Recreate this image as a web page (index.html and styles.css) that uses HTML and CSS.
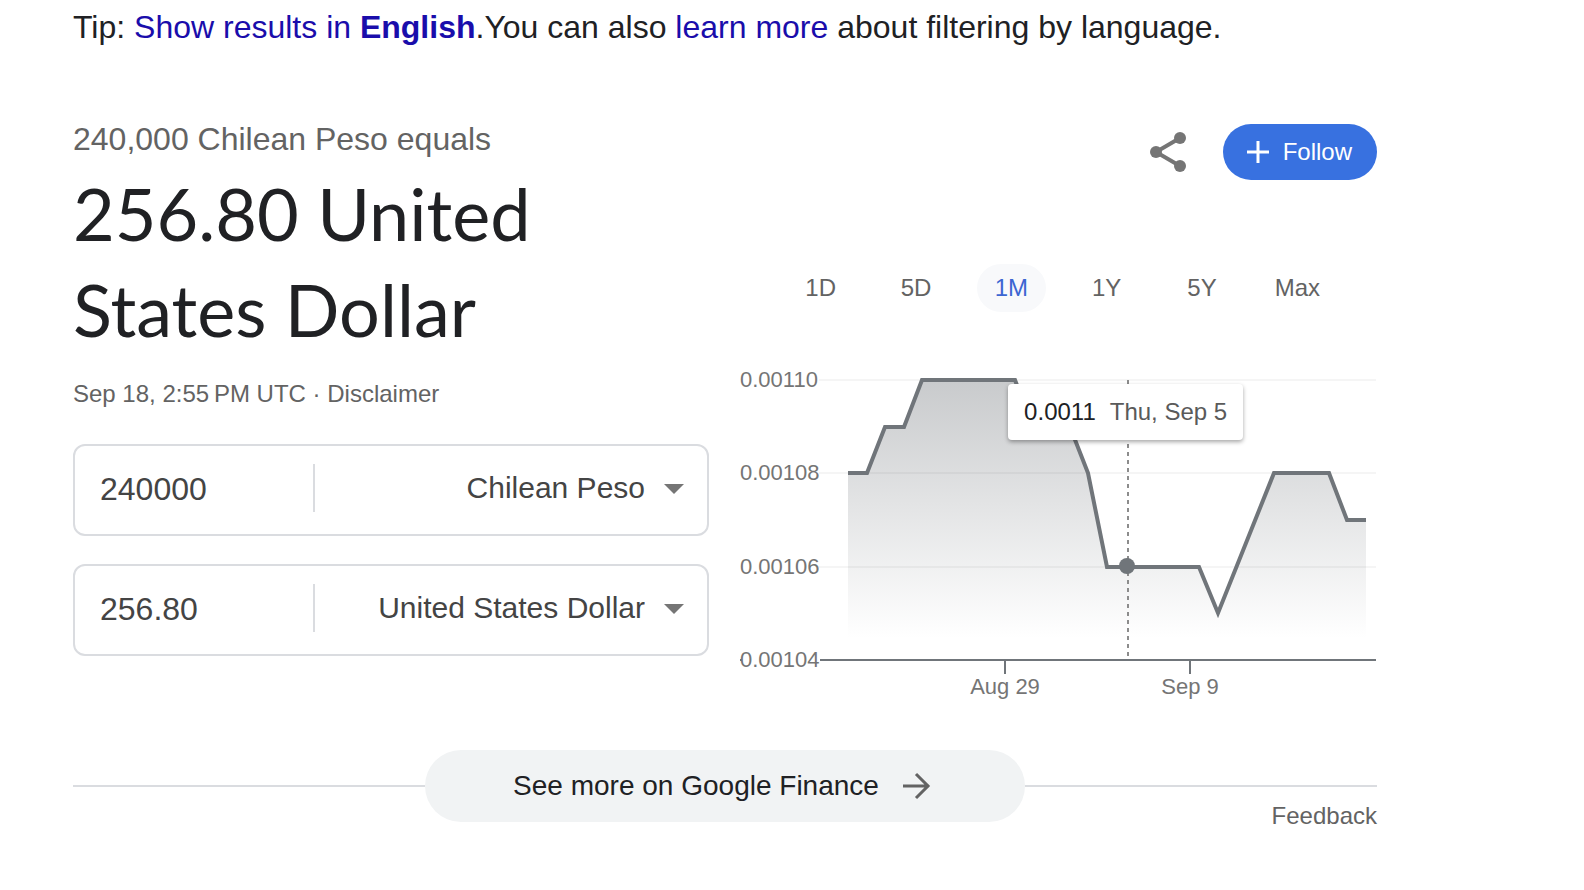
FILE: index.html
```html
<!DOCTYPE html>
<html lang="en">
<head>
<meta charset="utf-8">
<meta name="viewport" content="width=device-width, initial-scale=1">
<title>Chilean Peso to United States Dollar</title>
<link rel="stylesheet" href="styles.css">
</head>
<body>
<main class="page">
  <p class="tip">Tip: <a href="#english">Show results in <b>English</b></a>.You can also <a href="#learn">learn more</a> about filtering by language.</p>

  <div class="converter">
    <section class="rate">
      <p class="source">240,000 Chilean Peso equals</p>
      <h1 class="result">256.80 United States Dollar</h1>
      <p class="stamp">Sep 18, 2:55&#8239;PM UTC · <a href="#disclaimer">Disclaimer</a></p>
      <form class="fields">
        <div class="field">
          <input class="amount" type="text" value="240000" aria-label="Amount in Chilean Peso">
          <div class="picker">
            <select class="currency" aria-label="From currency"><option>Chilean Peso</option><option>United States Dollar</option></select>
            <svg class="caret" viewBox="0 0 20 10" aria-hidden="true"><path d="M0 0h20L10 10z"/></svg>
          </div>
        </div>
        <div class="field">
          <input class="amount" type="text" value="256.80" aria-label="Amount in United States Dollar">
          <div class="picker">
            <select class="currency" aria-label="To currency"><option>United States Dollar</option><option>Chilean Peso</option></select>
            <svg class="caret" viewBox="0 0 20 10" aria-hidden="true"><path d="M0 0h20L10 10z"/></svg>
          </div>
        </div>
      </form>
    </section>

    <section class="history">
      <div class="actions">
        <button class="share" type="button" aria-label="Share">
          <svg viewBox="0 0 24 24" aria-hidden="true"><path d="M18 5 6 12l12 7" fill="none" stroke="currentColor" stroke-width="2"/><circle cx="18" cy="5" r="3"/><circle cx="6" cy="12" r="3"/><circle cx="18" cy="19" r="3"/></svg>
        </button>
        <button class="follow" type="button">
          <svg viewBox="0 0 22 22" aria-hidden="true"><path d="M11 0v22M0 11h22" stroke="currentColor" stroke-width="3"/></svg>
          Follow
        </button>
      </div>
      <div class="ranges">
        <button class="range" type="button">1D</button>
        <button class="range" type="button">5D</button>
        <button class="range selected" type="button">1M</button>
        <button class="range" type="button">1Y</button>
        <button class="range" type="button">5Y</button>
        <button class="range" type="button">Max</button>
      </div>
      <div class="chart">
        <svg class="plot" viewBox="0 0 636 344" role="img" aria-label="Exchange rate over one month">
          <defs>
            <linearGradient id="fade" gradientUnits="userSpaceOnUse" x1="0" y1="20" x2="0" y2="278">
              <stop offset="0" stop-color="#70757a" stop-opacity=".38"/>
              <stop offset="1" stop-color="#70757a" stop-opacity="0"/>
            </linearGradient>
          </defs>
          <path class="area" d="M107 278V113H126L144 67H163L181 20H274L292 67H329L347 113L366 207H458L477 253L533 113H588L606 160H625V278z"/>
          <path class="grid" d="M78 20H635M78 113H635M78 207H635"/>
          <path class="axis" d="M-1 300H1M79 300H635M264 300V314M449 300V314"/>
          <path class="cursor" d="M387 20V298"/>
          <path class="line" d="M107 113H126L144 67H163L181 20H274L292 67H329L347 113L366 207H458L477 253L533 113H588L606 160H625"/>
          <circle class="dot" cx="386" cy="206" r="8"/>
          <g class="labels">
            <text x="-1" y="27">0.00110</text>
            <text x="-1" y="120">0.00108</text>
            <text x="-1" y="214">0.00106</text>
            <text x="-1" y="307">0.00104</text>
          </g>
          <g class="labels" text-anchor="middle">
            <text x="264" y="334">Aug 29</text>
            <text x="449" y="334">Sep 9</text>
          </g>
        </svg>
        <div class="tooltip"><strong>0.0011</strong><span>Thu, Sep 5</span></div>
      </div>
    </section>
  </div>

  <div class="more">
    <a class="more-link" href="#finance">See more on Google Finance
      <svg viewBox="0 0 28 28" aria-hidden="true"><path d="M0 14h26M13 2l12 12-12 12" fill="none" stroke="currentColor" stroke-width="3"/></svg>
    </a>
  </div>
  <footer class="footer"><a href="#feedback">Feedback</a></footer>
</main>
</body>
</html>
```
FILE: styles.css
```css
* { box-sizing: border-box; }

body {
  margin: 0;
  background: #fff;
  color: #202124;
  font-family: "Liberation Sans", Arial, sans-serif;
}

p, h1 { margin: 0; }
a { color: inherit; text-decoration: none; }
button, input, select { font: inherit; border: 0; background: none; padding: 0; }

.page {
  max-width: 1377px;
  padding: 7px 0 0 73px;
}

.tip { font-size: 32px; line-height: 40px; }
.tip a { color: #1a0dab; }

.converter {
  display: grid;
  grid-template-columns: 1fr 1fr;
  gap: 32px;
  margin-top: 72px;
}

.source { font-size: 32px; line-height: 40px; color: #636363; }

.result {
  margin-top: 6px;
  font-family: Lato, sans-serif;
  font-size: 72px;
  font-weight: 400;
  line-height: 96px;
}

.stamp {
  margin-top: 21px;
  font-size: 24px;
  line-height: 32px;
  color: #636363;
}

.fields {
  display: grid;
  gap: 28px;
  margin-top: 34px;
}

.field {
  display: flex;
  align-items: center;
  height: 92px;
  padding: 0 23px 4px 25px;
  border: 2px solid #dadce0;
  border-radius: 12px;
  color: #444;
}

.amount {
  flex: none;
  width: 36.5%;
  height: 48px;
  padding-top: 2px;
  color: inherit;
  font-size: 32px;
}

.picker {
  flex: 1;
  display: grid;
  align-items: center;
  height: 48px;
  border-left: 2px solid #dadce0;
}

.currency {
  grid-area: 1 / 1;
  appearance: none;
  width: 100%;
  height: 48px;
  padding: 0 39px 2px 0;
  color: inherit;
  font-size: 30px;
  text-align-last: right;
}

.caret {
  grid-area: 1 / 1;
  justify-self: end;
  width: 20px;
  height: 10px;
  margin-top: 2px;
  fill: #757575;
  pointer-events: none;
}

.history { padding-top: 5px; }

.actions {
  display: flex;
  justify-content: flex-end;
  align-items: center;
  gap: 31px;
}

.share { width: 48px; height: 48px; color: #757575; }
.share svg { display: block; fill: currentColor; }

.follow {
  display: flex;
  align-items: center;
  gap: 14px;
  height: 56px;
  padding: 0 25px 0 24px;
  border-radius: 28px;
  background: #3871e0;
  color: #fff;
  font-size: 24px;
}
.follow svg { width: 22px; height: 22px; }

.ranges {
  display: grid;
  grid-template-columns: repeat(6, 1fr);
  justify-items: center;
  margin: 84px 32px 0;
}

.range {
  height: 48px;
  padding: 0 18px;
  border-radius: 24px;
  color: #636363;
  font-size: 24px;
}
.range.selected { background: #f8f9fb; color: #3c66d2; }

.chart { position: relative; margin-top: 48px; }
.plot { display: block; width: 100%; overflow: visible; }
.area { fill: url(#fade); }
.grid { stroke: #000; stroke-opacity: .04; stroke-width: 2; }
.axis { stroke: #70757a; stroke-width: 2; fill: none; }
.cursor { stroke: #8c8c8c; stroke-width: 2; stroke-dasharray: 4 4; }
.line { stroke: #70757a; stroke-width: 4; fill: none; }
.dot { fill: #70757a; }
.labels { fill: #757575; font-size: 22px; }

.tooltip {
  position: absolute;
  top: 7%;
  left: 42%;
  display: flex;
  gap: 14px;
  padding: 12px 16px;
  border-radius: 4px;
  background: #fff;
  box-shadow: 0 2px 4px rgba(0, 0, 0, .35);
  color: #5a5a5a;
  font-size: 24px;
  line-height: 32px;
  white-space: nowrap;
}
.tooltip strong { color: #202124; font-weight: 400; }

.more {
  display: flex;
  align-items: center;
  margin-top: 46px;
}
.more::before, .more::after {
  content: "";
  flex: 1;
  height: 2px;
  background: #dadce0;
}

.more-link {
  display: flex;
  justify-content: center;
  align-items: center;
  gap: 24px;
  width: 46%;
  height: 72px;
  padding-right: 6px;
  border-radius: 36px;
  background: #f1f3f4;
  font-size: 28px;
}
.more-link svg { width: 28px; height: 28px; color: #636363; }

.footer {
  margin-top: -22px;
  color: #636363;
  font-size: 24px;
  line-height: 32px;
  text-align: right;
}
```
